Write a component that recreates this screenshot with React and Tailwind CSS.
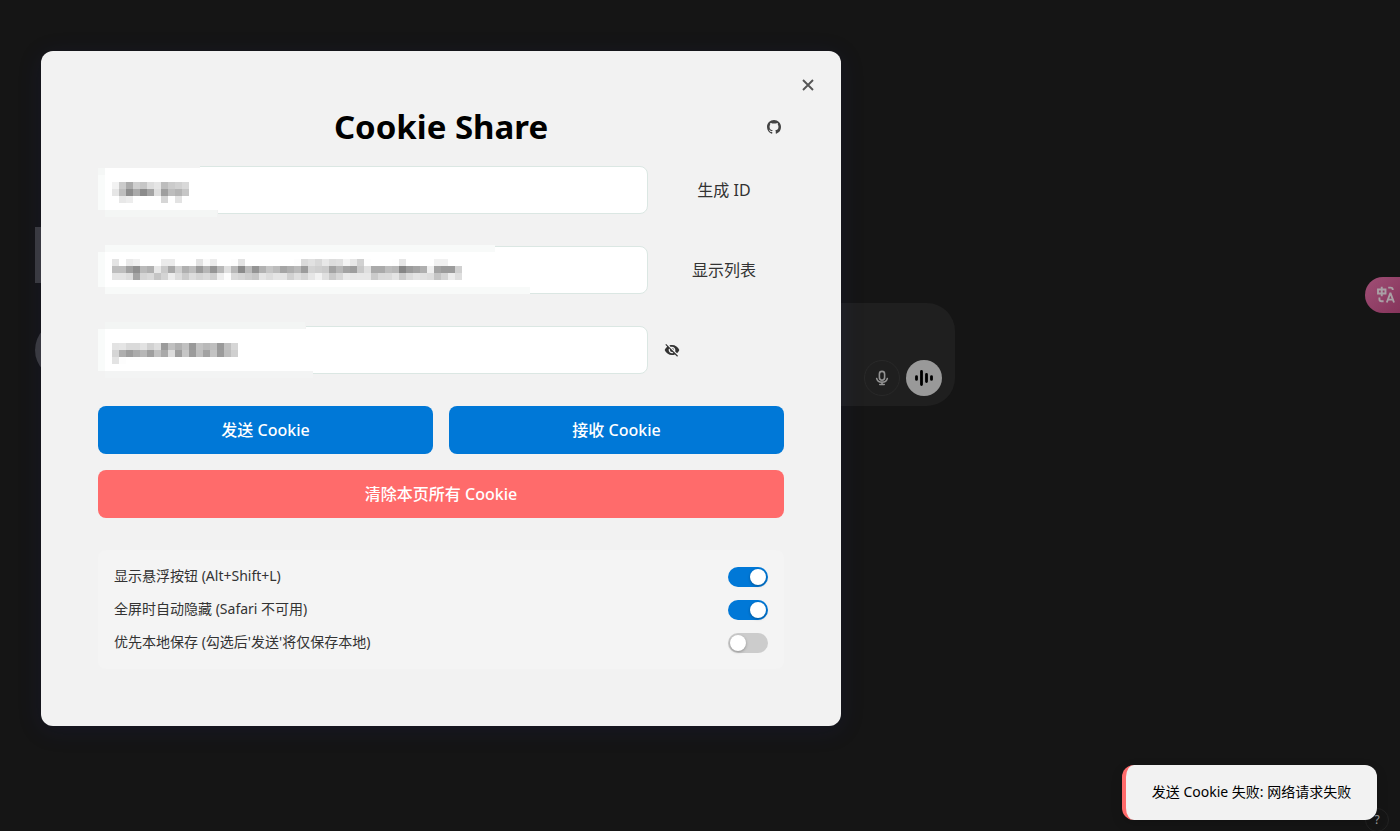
import { MdVisibilityOff } from "react-icons/md";

const CELL = 7;

const idMosaic = {
  top: 24,
  rows: [
    "f2 cb ab cf c6 dd e5 bd cb d1 d9",
    "e6 be 8d aa 8b a4 de 9f bd b4 c6",
    "-- e8 ed -- -- -- -- d6 -- e3 --",
  ],
};

const urlMosaic = {
  top: 21,
  rows: [
    "e4 -- ea f0 -- -- -- eb eb -- -- -- e3 fa ec -- -- fd e3 -- -- -- -- -- -- -- fd da e1 d8 e8 dd e0 f4 e7 d1 fd -- -- -- fe e6 -- -- -- -- f1 f1 -- --",
    "be be a1 8f ba b0 e7 ca a9 cf b0 be 9b b6 95 b8 df b8 8b ba 94 b2 c6 bc a5 af ba 9c d3 cf cb a3 b7 a4 9d c8 df aa aa bd b8 86 9b a4 af ef a3 9b 9b d0",
    "e4 e4 dd a4 d5 da c5 d4 ed dd cb dd d4 da cf ed fc da d5 ce c7 e5 dd e5 e5 d1 df d5 e6 f2 e0 ca d8 ea e6 e7 e7 cb da db e4 cc dd e5 e1 dd c4 d4 ec de",
  ],
};

const passwordMosaic = {
  top: 25,
  rows: [
    "e3 e5 da da e2 d1 dd 9b c0 b0 c0 99 c2 b9 be 99 c0 d6",
    "d5 ae 9d ac b7 9f c1 a9 dc 9e c6 9b be a2 c3 9b bd cf",
    "e3 fd -- -- -- -- -- -- -- -- -- -- -- -- -- -- -- --",
  ],
};

function Mosaic({ data, patches }) {
  return (
    <svg
      className="pointer-events-none absolute -top-2 left-0 h-16 w-[550px]"
      viewBox="0 0 550 64"
      shapeRendering="crispEdges"
      aria-hidden="true"
    >
      {patches.map(([x, y, w, h, fill], i) => (
        <rect key={i} x={x} y={y} width={w} height={h} fill={fill} />
      ))}
      {data.rows.map((row, r) =>
        row.split(" ").map((v, c) =>
          v === "--" ? null : (
            <rect
              key={`${r}-${c}`}
              x={14 + c * CELL}
              y={data.top + r * CELL}
              width={CELL}
              height={CELL}
              fill={`#${v}${v}${v}`}
            />
          )
        )
      )}
    </svg>
  );
}

function Field({ label, type = "text", data, patches, children }) {
  return (
    <div className="flex items-center gap-4">
      <div className="relative flex-1">
        <input
          type={type}
          aria-label={label}
          className="block h-12 w-full rounded-lg border border-[#dbe7e3] bg-white px-4 text-base outline-none"
        />
        <Mosaic data={data} patches={patches} />
      </div>
      <div className="flex w-[120px] items-center">{children}</div>
    </div>
  );
}

function Toggle({ id, label, defaultChecked }) {
  return (
    <div className="flex h-[21px] items-center justify-between">
      <label htmlFor={id} className="self-start text-sm leading-[19px] text-[#333]">
        {label}
      </label>
      <input
        id={id}
        type="checkbox"
        defaultChecked={defaultChecked}
        className="h-5 w-10 cursor-pointer appearance-none rounded-full bg-[#ccc] p-0.5 before:block before:size-4 before:rounded-full before:bg-white before:shadow-[0_1px_3px_rgba(0,0,0,0.3)] checked:bg-[#0078d7] checked:before:translate-x-5"
      />
    </div>
  );
}

const textButton = "h-12 w-full rounded-lg text-center text-base text-[#333]";
const actionButton = "h-12 rounded-lg bg-[#0078d7] text-base font-medium text-white";

export default function App() {
  return (
    <div className="relative min-h-screen overflow-hidden bg-[#151515] pt-[51px] pl-[41px] font-['Noto_Sans','Noto_Sans_CJK_SC',sans-serif]">
      <div className="absolute top-[227px] left-[35px] h-14 w-10 bg-[#3c3c3e]" />
      <div className="absolute top-[321px] left-[35px] size-[58px] rounded-full bg-[#3c3c3e]" />

      <div className="absolute top-[303px] left-[200px] flex h-[103px] w-[755px] items-end justify-end gap-1.5 rounded-[28px] bg-[#1f1f1f] px-[13px] py-2.5">
        <button
          type="button"
          aria-label="语音输入"
          className="flex size-9 items-center justify-center rounded-full border border-[#292929] text-[#939393]"
        >
          <svg viewBox="0 0 16 16" className="size-4" fill="none" stroke="currentColor" strokeWidth="1.6" strokeLinecap="round">
            <rect x="5.4" y="1.4" width="5.2" height="8.8" rx="2.6" />
            <path d="M2.7 8.6a5.4 4.4 0 0 0 10.6 0M8 12.2v2.2M5.8 14.5h4.4" />
          </svg>
        </button>
        <button
          type="button"
          aria-label="语音模式"
          className="flex size-9 items-center justify-center rounded-full bg-[#999] text-black"
        >
          <svg viewBox="0 0 20 20" className="size-5" stroke="currentColor" strokeWidth="2.8" strokeLinecap="round">
            <path d="M2.5 8.6v2.8M7.5 3.4v13.2M12.5 6.4v7.2M17.5 8.6v2.8" />
          </svg>
        </button>
      </div>

      <button
        type="button"
        aria-label="翻译"
        className="absolute top-[277px] right-0 flex h-9 w-[35px] items-center rounded-l-full bg-linear-to-br from-[#a04f76] to-[#85345b] pl-3 text-[#a9a0a5]"
      >
        <svg viewBox="0 0 18 18" className="size-[18px]" fill="none" stroke="currentColor" strokeWidth="1.9">
          <path d="M1 3.5h7.5v4H1zM4.75 .8v9.4" />
          <path d="M9.8 16.5l3.4-9h.4l3.4 9M11 13.6h4.8" />
          <path d="M11.2 1.6h2.4q2.2 0 2.2 2.4M2.4 11.6v1.6q0 2 2.2 2h2" />
        </svg>
      </button>

      <main
        role="dialog"
        aria-labelledby="dialog-title"
        className="relative w-full max-w-[800px] rounded-xl bg-[#f2f2f2] px-[57px] pt-14 pb-[57px] shadow-[0_4px_24px_rgba(31,38,135,0.15)]"
      >
        <button
          type="button"
          aria-label="关闭"
          className="absolute top-[22px] right-[21px] flex size-6 items-center justify-center text-[#555]"
        >
          <svg viewBox="0 0 12 12" className="size-3" stroke="currentColor" strokeWidth="1.9">
            <path d="M1 1l10 10M11 1L1 11" />
          </svg>
        </button>

        <header className="relative mb-[19px] flex h-10 items-center justify-center">
          <h1 id="dialog-title" className="text-[33px] leading-10 font-bold text-black">
            Cookie Share
          </h1>
          <a href="#github" aria-label="GitHub" className="absolute right-[3px] text-[#444]">
            <svg viewBox="0 0 16 16" className="size-3.5" fill="currentColor">
              <path d="M8 0C3.58 0 0 3.58 0 8c0 3.54 2.29 6.53 5.47 7.59.4.07.55-.17.55-.38 0-.19-.01-.82-.01-1.49-2.01.37-2.53-.49-2.69-.94-.09-.23-.48-.94-.82-1.13-.28-.15-.68-.52-.01-.53.63-.01 1.08.58 1.23.82.72 1.21 1.87.87 2.33.66.07-.52.28-.87.51-1.07-1.78-.2-3.64-.89-3.64-3.95 0-.87.31-1.59.82-2.15-.08-.2-.36-1.02.08-2.12 0 0 .67-.21 2.2.82.64-.18 1.32-.27 2-.27s1.36.09 2 .27c1.53-1.04 2.2-.82 2.2-.82.44 1.1.16 1.92.08 2.12.51.56.82 1.27.82 2.15 0 3.07-1.87 3.75-3.65 3.95.29.25.54.73.54 1.48 0 1.07-.01 1.93-.01 2.2 0 .21.15.46.55.38A8.01 8.01 0 0 0 16 8c0-4.42-3.58-8-8-8z" />
            </svg>
          </a>
        </header>

        <form className="flex flex-col gap-8" onSubmit={(e) => e.preventDefault()}>
          <Field
            label="ID"
            data={idMosaic}
            patches={[
              [0, 0, 102, 10, "#f2f2f2"],
              [0, 10, 7, 54, "#f2f2f2"],
              [0, 52, 120, 12, "#f2f2f2"],
              [0, 10, 7, 7, "#f5f7f6"],
              [0, 17, 7, 35, "#f9fbfa"],
              [7, 10, 100, 42, "#fff"],
              [7, 52, 112, 7, "#f4f6f5"],
            ]}
          >
            <button type="button" className={textButton}>生成 ID</button>
          </Field>
          <Field
            label="服务器地址"
            data={urlMosaic}
            patches={[
              [0, 0, 397, 14, "#f2f2f2"],
              [0, 14, 7, 50, "#f2f2f2"],
              [0, 49, 432, 15, "#f2f2f2"],
              [7, 7, 390, 7, "#f8faf9"],
              [0, 14, 7, 35, "#f9fbfa"],
              [7, 14, 422, 35, "#fff"],
              [7, 49, 425, 7, "#f8faf9"],
            ]}
          >
            <button type="button" className={textButton}>显示列表</button>
          </Field>
          <Field
            label="密码"
            type="password"
            data={passwordMosaic}
            patches={[
              [0, 0, 208, 11, "#f2f2f2"],
              [0, 11, 7, 53, "#f2f2f2"],
              [0, 53, 215, 11, "#f2f2f2"],
              [7, 4, 200, 7, "#f3f5f4"],
              [0, 11, 7, 42, "#f9fbfa"],
              [7, 11, 205, 42, "#fff"],
              [7, 53, 208, 7, "#f3f4f4"],
            ]}
          >
            <button type="button" aria-label="显示密码" className="text-[#333]">
              <MdVisibilityOff className="size-4" />
            </button>
          </Field>
        </form>

        <div className="mt-8 grid grid-cols-2 gap-4">
          <button type="button" className={actionButton}>发送 Cookie</button>
          <button type="button" className={actionButton}>接收 Cookie</button>
          <button type="button" className="col-span-2 h-12 rounded-lg bg-[#ff6b6b] text-base font-medium text-white">
            清除本页所有 Cookie
          </button>
        </div>

        <section className="mt-8 flex flex-col gap-3 rounded-lg bg-[#f4f4f4] p-4">
          <Toggle id="float" label="显示悬浮按钮 (Alt+Shift+L)" defaultChecked />
          <Toggle id="fullscreen" label="全屏时自动隐藏 (Safari 不可用)" defaultChecked />
          <Toggle id="local" label="优先本地保存 (勾选后'发送'将仅保存本地)" />
        </section>
      </main>

      <button
        type="button"
        aria-label="帮助"
        className="absolute right-[11px] -bottom-px flex size-6 items-center justify-center rounded-full border border-[#222] text-xs text-[#a0a0a0]"
      >
        ?
      </button>
      <div
        role="alert"
        className="absolute right-[23px] bottom-[11px] min-w-[255px] rounded-xl border-l-4 border-[#ff6b6b] bg-[#f2f2f2] px-6 pt-4 pb-[18px] text-center text-sm leading-[21px] text-black shadow-[0_4px_12px_rgba(0,0,0,0.15)]"
      >
        发送 Cookie 失败: 网络请求失败
      </div>
    </div>
  );
}
